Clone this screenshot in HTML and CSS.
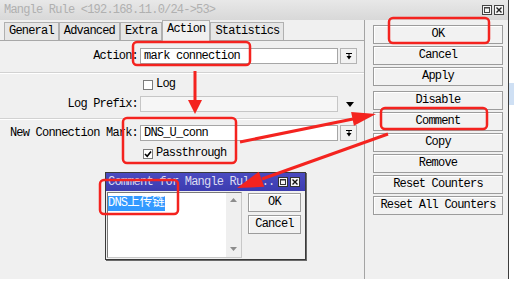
FILE: index.html
```html
<!doctype html>
<html>

<head>
	<meta charset='utf-8'>
	<title>Mangle Rule</title>

	<link rel="stylesheet" href="styles.css">
</head>

<body>
	<div class="screen">
		<div class="window">
			<div class="titlebar">
				<span class="title">Mangle Rule &lt;192.168.11.0/24-&gt;53&gt;</span>
				<div class="ctrls">
					<svg class="ctrl" width="10" height="10"><rect x="0.5" y="0.5" width="9" height="9" fill="#f6f6f6" stroke="#444"/><rect x="2.5" y="2.5" width="5" height="5" fill="none" stroke="#444"/><line x1="2" y1="3" x2="8" y2="3" stroke="#444"/></svg>
					<svg class="ctrl" width="10" height="10"><rect x="0.5" y="0.5" width="9" height="9" fill="#f6f6f6" stroke="#444"/><path d="M2.5 2.5 L7.5 7.5 M7.5 2.5 L2.5 7.5" stroke="#222" stroke-width="1.4"/></svg>
				</div>
			</div>
			<div class="main">
				<div class="panel">
					<div class="tabs">
						<div class="tab">General</div>
						<div class="tab">Advanced</div>
						<div class="tab">Extra</div>
						<div class="tab active">Action</div>
						<div class="tab">Statistics</div>
					</div>
					<div class="form">
						<div class="row">
							<span class="label">Action:</span>
							<div class="field">mark connection</div>
							<div class="dd"><svg width="8" height="8"><path d="M1 1.5 H7 M4 1.5 V4" stroke="#000"/><path d="M1.5 4 H6.5 L4 7.5 Z" fill="#000"/></svg></div>
						</div>
						<div class="sep"></div>
						<div class="row check m5">
							<span></span>
							<div class="cb"><span class="box"></span>Log</div>
						</div>
						<div class="row m6">
							<span class="label">Log Prefix:</span>
							<div class="field off"></div>
							<div class="tri"><svg width="8" height="5"><path d="M0 0 H8 L4 5 Z" fill="#000"/></svg></div>
						</div>
						<div class="sep m6"></div>
						<div class="row m5">
							<span class="label">New Connection Mark:</span>
							<div class="field">DNS_U_conn</div>
							<div class="dd"><svg width="8" height="8"><path d="M1 1.5 H7 M4 1.5 V4" stroke="#000"/><path d="M1.5 4 H6.5 L4 7.5 Z" fill="#000"/></svg></div>
						</div>
						<div class="row check m7">
							<span></span>
							<div class="cb"><span class="box"><svg width="8" height="8"><path d="M1 4 L3.2 6.3 L7 1.5" fill="none" stroke="#000" stroke-width="1.6"/></svg></span>Passthrough</div>
						</div>
					</div>
				</div>
				<div class="buttons">
					<div class="btn">OK</div>
					<div class="btn">Cancel</div>
					<div class="btn">Apply</div>
					<div class="btn split">Disable</div>
					<div class="btn">Comment</div>
					<div class="btn">Copy</div>
					<div class="btn">Remove</div>
					<div class="btn">Reset Counters</div>
					<div class="btn">Reset All Counters</div>
				</div>
			</div>
		</div>
		<div class="behind"><div class="sel"></div></div>

		<div class="dialog">
			<div class="dtitle">
				<span>Comment for Mangle Rule...</span>
				<div class="ctrls">
					<svg class="ctrl" width="10" height="10"><rect x="0.5" y="0.5" width="9" height="9" fill="#f6f6f6" stroke="#333"/><rect x="2.5" y="2.5" width="5" height="5" fill="none" stroke="#333"/><line x1="2" y1="3" x2="8" y2="3" stroke="#333"/></svg>
					<svg class="ctrl" width="10" height="10"><rect x="0.5" y="0.5" width="9" height="9" fill="#f6f6f6" stroke="#333"/><path d="M2.5 2.5 L7.5 7.5 M7.5 2.5 L2.5 7.5" stroke="#111" stroke-width="1.4"/></svg>
				</div>
			</div>
			<div class="dbody">
				<div class="memo">
					<div class="text"><span class="hl">DNS<span class="cjk">上传链</span></span></div>
					<div class="scroll">
						<svg width="7" height="4"><path d="M0 4 H7 L3.5 0 Z" fill="#8c8c8c"/></svg>
						<svg width="7" height="4"><path d="M0 0 H7 L3.5 4 Z" fill="#8c8c8c"/></svg>
					</div>
				</div>
				<div class="dbtns">
					<div class="btn">OK</div>
					<div class="btn">Cancel</div>
				</div>
			</div>
		</div>

		<!-- red annotations drawn over the screenshot -->
		<svg class="marks" width="514" height="282">
			<g fill="none" stroke="#f4231f" stroke-width="2.5">
				<rect x="133" y="42" width="117" height="23" rx="4"/>
				<rect x="123" y="118" width="113" height="45" rx="4"/>
				<rect x="389" y="18" width="100" height="25" rx="4"/>
				<rect x="381" y="108" width="106" height="21" rx="4"/>
				<rect x="100" y="180" width="78" height="34" rx="4"/>
			</g>
			<g stroke="#f4231f" stroke-width="3" fill="#f4231f">
				<line x1="195" y1="71" x2="195" y2="101"/>
				<polygon points="188,100 202,100 195,114" stroke="none"/>
				<line x1="240" y1="142" x2="353" y2="119"/>
				<polygon points="353.9,125.7 351.1,112 376,114" stroke="none"/>
				<line x1="388" y1="134" x2="262" y2="179"/>
				<polygon points="264.2,186.8 258.8,171.7 237,188" stroke="none"/>
			</g>
		</svg>
	</div>
</body>

</html>
```

FILE: styles.css
```css
* {
	box-sizing: border-box;
}

body {
	margin: 0;
	font-family: "Liberation Mono", "Noto Sans CJK SC", monospace;
	font-size: 12px;
	letter-spacing: -0.8px;
	color: #000;
}

.screen {
	width: 514px;
	height: 282px;
	position: relative;
	background: #fff;
	overflow: hidden;
	display: flex;
}

.window {
	width: 509px;
	height: 279px;
	background: #f0f0f0;
	border-right: 1px solid #3c3c3c;
	display: flex;
	flex-direction: column;
}

.titlebar {
	height: 20px;
	background: linear-gradient(#e8e8e8, #d8d8d8);
	display: flex;
	align-items: center;
	justify-content: space-between;
	padding: 0 4px 0 4px;
	color: #b0b0b0;
}

.ctrls {
	display: flex;
	gap: 2px;
}

.ctrl {
	display: block;
}

.main {
	flex: 1;
	display: flex;
}

.panel {
	width: 365px;
	border-right: 1px solid #a4a4a4;
}

.tabs {
	height: 21px;
	display: flex;
	align-items: flex-end;
	padding-left: 4px;
	border-bottom: 1px solid #a8a8a8;
}

.tab {
	height: 18px;
	line-height: 17px;
	padding: 0 4px;
	border: 1px solid #b0b0b0;
	border-bottom: none;
	background: #e6e6e6;
}

.tab.active {
	height: 21px;
	line-height: 16px;
	margin-bottom: -1px;
	background: #f0f0f0;
}

.form {
	padding-top: 7px;
}

.row {
	display: grid;
	grid-template-columns: 138px 198px 17px;
	column-gap: 2px;
	align-items: center;
	height: 16px;
}

.row.check {
	height: 11px;
}

.m5 {
	margin-top: 5px;
}

.m6 {
	margin-top: 6px;
}

.m7 {
	margin-top: 7px;
}

.label {
	text-align: right;
	white-space: nowrap;
}

.field {
	height: 16px;
	line-height: 14px;
	padding-left: 3px;
	border: 1px solid #a6a6a6;
	background: #fff;
}

.field.off {
	border-color: #c6c6c6;
	background: #f6f6f6;
}

.dd {
	height: 16px;
	border: 1px solid #b4b4b4;
	background: #f2f2f2;
	display: flex;
	align-items: center;
	justify-content: center;
}

.dd svg,
.tri svg {
	display: block;
}

.tri {
	display: flex;
	justify-content: center;
	padding-left: 2px;
}

.cb {
	display: flex;
	align-items: center;
	gap: 3px;
	padding-left: 3px;
	line-height: 11px;
}

.box {
	width: 10px;
	height: 10px;
	border: 1px solid #7c7c7c;
	background: #fff;
	display: flex;
	align-items: center;
	justify-content: center;
}

.sep {
	height: 2px;
	margin-top: 8px;
	border-top: 1px solid #d2d2d2;
	border-bottom: 1px solid #fff;
}

.sep.m6 {
	margin-top: 6px;
}

.buttons {
	flex: 1;
	display: flex;
	flex-direction: column;
	gap: 2px;
	padding: 5px 5px 0 8px;
}

.btn {
	height: 19px;
	line-height: 17px;
	text-align: center;
	border: 1px solid #9c9c9c;
	background: #f2f2f2;
	box-shadow: inset 1px 1px 0 #fff;
	white-space: nowrap;
}

.btn.split {
	margin-top: 3px;
}

.behind {
	flex: 1;
	padding-top: 83px;
}

.behind .sel {
	height: 22px;
	background: #cfe0f4;
}

.dialog {
	position: absolute;
	left: 105px;
	top: 172px;
	width: 201px;
	height: 88px;
	border: 1px solid #3a3a3a;
	background: #f0f0f0;
	box-shadow: 1px 1px 0 #6a6a6a;
}

.dtitle {
	height: 18px;
	background: linear-gradient(#4a4ac0, #3c3cb0);
	color: #dcdcf0;
	display: flex;
	align-items: center;
	justify-content: space-between;
	padding: 0 5px 0 2px;
	white-space: nowrap;
}

.dbody {
	display: flex;
	padding: 1px 0 0 1px;
}

.memo {
	width: 135px;
	height: 66px;
	border: 1px solid #7a7a7a;
	border-right-color: #c8c8c8;
	border-bottom-color: #c8c8c8;
	background: #fff;
	display: flex;
}

.text {
	flex: 1;
	padding-top: 2px;
	line-height: 12px;
}

.hl {
	background: #3399ff;
	color: #fff;
	padding-bottom: 1px;
}

.cjk {
	font-family: "Noto Sans CJK SC", sans-serif;
	font-size: 12.5px;
	letter-spacing: 0;
}

.scroll {
	width: 15px;
	background: #efefef;
	display: flex;
	flex-direction: column;
	justify-content: space-between;
	align-items: center;
	padding: 5px 0 6px;
}

.scroll svg {
	display: block;
}

.dbtns {
	width: 53px;
	margin-left: 6px;
	padding-top: 1px;
	display: flex;
	flex-direction: column;
	gap: 3px;
}

.marks {
	position: absolute;
	left: 0;
	top: 0;
	pointer-events: none;
}
```
